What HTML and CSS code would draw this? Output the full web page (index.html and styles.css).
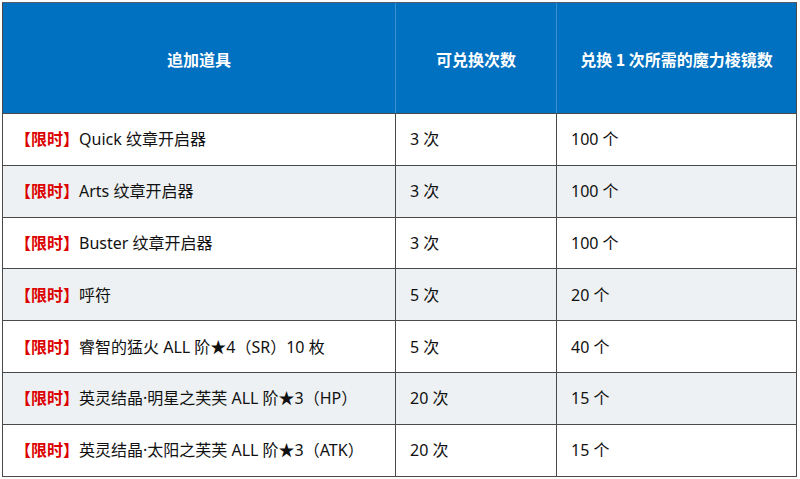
FILE: index.html
```html
<!DOCTYPE html>
<html lang="zh">
<head>
<meta charset="utf-8">
<link rel="stylesheet" href="styles.css">
</head>
<body>
<table class="tbl">
  <colgroup>
    <col class="c1"><col class="c2"><col class="c3">
  </colgroup>
  <thead>
    <tr>
      <th>追加道具</th>
      <th>可兑换次数</th>
      <th>兑换 1 次所需的魔力棱镜数</th>
    </tr>
  </thead>
  <tbody>
    <tr><td><span class="tag">【限时】</span>Quick 纹章开启器</td><td>3 次</td><td>100 个</td></tr>
    <tr><td><span class="tag">【限时】</span>Arts 纹章开启器</td><td>3 次</td><td>100 个</td></tr>
    <tr><td><span class="tag">【限时】</span>Buster 纹章开启器</td><td>3 次</td><td>100 个</td></tr>
    <tr><td><span class="tag">【限时】</span>呼符</td><td>5 次</td><td>20 个</td></tr>
    <tr><td><span class="tag">【限时】</span>睿智的猛火 ALL 阶★4（SR）10 枚</td><td>5 次</td><td>40 个</td></tr>
    <tr><td><span class="tag">【限时】</span>英灵结晶·明星之芙芙 ALL 阶★3（HP）</td><td>20 次</td><td>15 个</td></tr>
    <tr><td><span class="tag">【限时】</span>英灵结晶·太阳之芙芙 ALL 阶★3（ATK）</td><td>20 次</td><td>15 个</td></tr>
  </tbody>
</table>
</body>
</html>
```
FILE: styles.css
```css
html, body {
  margin: 0;
  padding: 0;
  background: #ffffff;
}
body {
  padding: 2px 0 0 2px;
  font-family: "Noto Sans", "Noto Sans CJK SC", sans-serif;
}
.tbl {
  border-collapse: collapse;
  table-layout: fixed;
  width: 794px;
  border: 1px solid #4a4a4a;
}
.c1 { width: 393px; }
.c2 { width: 161px; }
.c3 { width: 240px; }
.tbl th {
  height: 108px;
  padding: 2px 0 0 0;
  background: #0070c0;
  color: #ffffff;
  font-family: "Noto Sans CJK SC", sans-serif;
  font-size: 16px;
  font-weight: bold;
  text-align: center;
  vertical-align: middle;
  border-left: 1px solid #3d8fcf;
  border-top: 1px solid #5a5a6a;
  border-bottom: 1px solid #4a4a4a;
}
.tbl th:first-child { border-left: 1px solid #4a4a4a; }
.tbl td {
  height: 48.8px;
  padding: 0 0 2px 14px;
  font-size: 16px;
  color: #111111;
  border: 1px solid #4a4a4a;
  vertical-align: middle;
  white-space: nowrap;
}
.tbl tbody tr:nth-child(even) td {
  background: #eef1f3;
}
.tag {
  color: #dc0000;
  font-family: "Noto Sans CJK SC", sans-serif;
  font-weight: bold;
  margin-left: -2px;
}
```
